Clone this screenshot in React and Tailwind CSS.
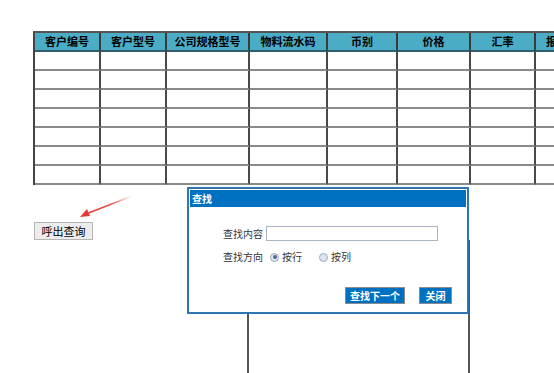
import React from 'react';

const cols = [
    { name: '客户编号', w: 66 },
    { name: '客户型号', w: 66 },
    { name: '公司规格型号', w: 83 },
    { name: '物料流水码', w: 78 },
    { name: '币别', w: 70 },
    { name: '价格', w: 73 },
    { name: '汇率', w: 65 },
    { name: '报价', w: 44 },
];

const rows = [0, 1, 2, 3, 4, 5, 6];

function Radio({ checked, label }) {
    return (
        <label className="flex items-center gap-[3px]">
            <span className="w-[9px] h-[9px] rounded-full border border-[#9aa8bc] bg-[#dde4ee] flex items-center justify-center">
                {checked && <span className="w-[4px] h-[4px] rounded-full bg-[#4f6a8f]" />}
            </span>
            <span>{label}</span>
        </label>
    );
}

export default function App() {
    return (
        <div
            className="relative w-[554px] h-[373px] overflow-hidden bg-white pt-[31px]"
            style={{ fontFamily: '"Noto Sans CJK SC", "Noto Sans", sans-serif' }}
        >
            {/* data grid */}
            <table className="ml-[33px] border-separate border-spacing-0 table-fixed w-[545px] border-l-2 border-t-2 border-l-[#444] border-t-[#555]">
                <thead>
                    <tr className="h-[19px]">
                        {cols.map((c) => (
                            <th
                                key={c.name}
                                style={{ width: c.w }}
                                className="bg-[#4bacc6] text-[11px] leading-none font-bold text-black border-r-2 border-b-2 border-r-[#3a3a3a] border-b-[#2f5f6e] p-0 whitespace-nowrap"
                            >
                                {c.name}
                            </th>
                        ))}
                    </tr>
                </thead>
                <tbody>
                    {rows.map((r) => (
                        <tr key={r} className="h-[19px]">
                            {cols.map((c) => (
                                <td key={c.name} className="border-r-2 border-b-2 border-r-[#4a4a4a] border-b-[#8a8a8a] p-0" />
                            ))}
                        </tr>
                    ))}
                </tbody>
            </table>

            {/* trigger button */}
            <button className="ml-[34px] mt-[37px] w-[59px] h-[18px] bg-[#ececec] border border-[#b5b5b5] text-[11px] leading-none text-black flex items-center justify-center">
                呼出查询
            </button>

            {/* grid continuing below */}
            <div className="ml-[247px] w-[223px] h-[140px] border-l-2 border-r-2 border-[#555]" />

            {/* red arrow */}
            <svg className="absolute left-[76px] top-[193px]" width="60" height="28" viewBox="0 0 60 28">
                <defs>
                    <linearGradient id="ar" x1="1" y1="0" x2="0" y2="1">
                        <stop offset="0" stopColor="#e53935" stopOpacity="0" />
                        <stop offset="0.5" stopColor="#e53935" stopOpacity="0.9" />
                        <stop offset="1" stopColor="#e53935" />
                    </linearGradient>
                </defs>
                <line x1="56" y1="3" x2="10" y2="21" stroke="url(#ar)" strokeWidth="1.6" />
                <polygon points="4,24 11,16 14,23" fill="#e53935" />
            </svg>

            {/* find dialog */}
            <div className="absolute left-[187px] top-[187px] w-[282px] h-[127px] border-2 border-[#2e75b6] bg-white p-px flex flex-col">
                <div className="h-[17px] bg-[#0070c0] text-white text-[10px] font-bold leading-none flex items-center pl-[2px]">
                    查找
                </div>
                <div className="flex flex-col pl-[33px] pt-[19px] text-[10px] text-[#333] leading-none">
                    <div className="flex items-center h-[15px]">
                        <span className="w-[43px]">查找内容</span>
                        <div className="w-[172px] h-[15px] border border-[#a8b4c6] bg-white" />
                    </div>
                    <div className="flex items-center mt-[9px] h-[14px]">
                        <span className="w-[47px]">查找方向</span>
                        <div className="flex gap-[17px]">
                            <Radio checked label="按行" />
                            <Radio label="按列" />
                        </div>
                    </div>
                    <div className="flex justify-end gap-[14px] mt-[23px] pr-[14px]">
                        <button className="w-[60px] h-[17px] bg-[#0070c0] border border-[#8c8c8c] text-white text-[10px] font-bold leading-none">
                            查找下一个
                        </button>
                        <button className="w-[33px] h-[17px] bg-[#0070c0] border border-[#8c8c8c] text-white text-[10px] font-bold leading-none">
                            关闭
                        </button>
                    </div>
                </div>
            </div>
        </div>
    );
}
